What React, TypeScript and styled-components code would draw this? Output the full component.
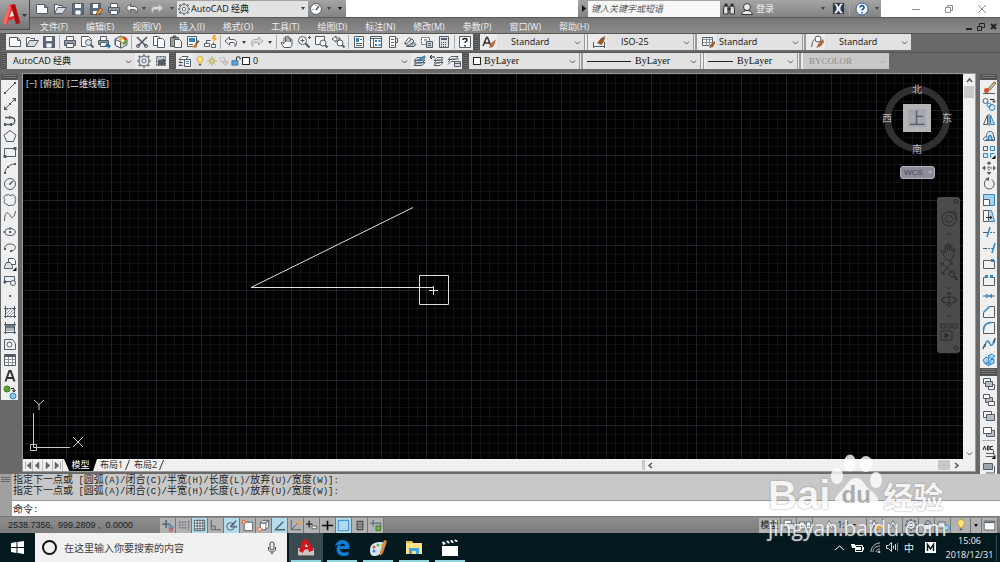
import React from 'react';
import type { ReactNode } from 'react';
import styled, { createGlobalStyle, css } from 'styled-components';

const ui = '"Open Sans", "Noto Sans CJK SC", sans-serif';
const mono = '"Liberation Mono", "Noto Sans CJK SC", monospace';

const GlobalStyle = createGlobalStyle`
  *, *::before, *::after { box-sizing: border-box; }
  body { margin: 0; background: #6b6b6b; font-family: ${ui}; font-size: 9px; line-height: 12px; }
  button, input, select { font: inherit; color: inherit; border: 0; margin: 0; padding: 0; background: none; border-radius: 0; }
  svg { display: block; flex: none; }
`;

/* ---------- icons, all on a 16 unit square ---------- */

const K = '#525c66';
const B = '#2f86c8';
const page = '#fbfcfd';

const icons: Record<string, ReactNode> = {
  New: <path d="M2.5 3.5h8l3 3v6h-11z M10.5 3.5v3h3" fill={page} />,
  Open: <><path d="M2.5 12.5v-9h3l1 1h4v2" fill={page} /><path d="M2.5 12.5l3-6h9l-4 6z" fill="#d5dbe1" /></>,
  Save: <><path d="M2.5 2.5h11v11h-11z" fill="#5c6c80" /><path d="M5 3h6v4H5zM5.5 9.5h5v4h-5z" fill={page} stroke="none" /></>,
  'Save As': <><path d="M2.5 2.5h10v11h-10z" fill="#5c6c80" /><path d="M5 3h5v4H5zM5 10h5v3H5z" fill={page} stroke="none" /><path d="M8 14l1-3 4-4 2 2-4 4z" fill="#e79a3c" stroke="#8a5a26" /></>,
  Print: <><path d="M4.5 6.5v-4h7v4" fill={page} /><path d="M2.5 6.5h11v5h-11z" fill="#8d98a3" /><path d="M4.5 9.5h7v4h-7z" fill={page} /></>,
  'Print Preview': <><path d="M12.5 7V5.5l-3-3h-7v10H7" fill={page} /><circle cx="9.5" cy="8.5" r="3" fill="#dbe7f0" /><path d="M11.5 10.5l3 3" strokeWidth="2" /></>,
  Publish: <><path d="M4.5 6.5v-4h6v4" fill={page} /><path d="M2.5 6.5h10v4h-10z" fill="#8d98a3" /><path d="M4.5 8.5h6v4h-6z" fill={page} /><path d="M9 11h3V9l3 3-3 3v-2H9z" fill="#1f6fc0" stroke="none" /></>,
  '3D DWF': <><path d="M8 2l6 3v6l-6 3-6-3V5z" fill="#cfe0ee" /><circle cx="10" cy="6.500" r="4" fill="#e8b23c" stroke="none" /><path d="M10 6.500V2.500a4 4 0 0 1 4 4z" fill="#d2453a" stroke="none" /><path d="M10 6.500h4a4 4 0 0 1-4 4z" fill="#4aa04a" stroke="none" /><path d="M2.5 5.5l5 2.500v6l-5-2.500z" fill={page} /><circle cx="10" cy="6.500" r="1.500" fill={page} stroke="none" /></>,
  Cut: <><path d="M3 3l9 9M13 3l-9 9" strokeWidth="1.6" /><circle cx="4" cy="12" r="1.5" /><circle cx="12" cy="12" r="1.5" /></>,
  Copy: <><path d="M2.5 2.5h5l2 2v7h-7z" fill={page} /><path d="M6.5 4.5h5l2 2v7h-7z" fill={page} /></>,
  Paste: <><path d="M2.5 3.5h8v9h-8z" fill="#b09a7c" /><path d="M5 2h3v2H5z" fill={K} /><path d="M6.5 5.5h5l2 2v6h-7z" fill={page} /></>,
  'Match Properties': <><path d="M2.5 2.5h9v10h-9z" fill={page} /><path d="M4 4h6v4H4z" fill={B} stroke="none" /><path d="M4 10.5h4" /><path d="M13 6l1.500 1-3 4-1.500-1z" fill="#6b5642" stroke="none" /><path d="M7 13l3-3 2 1-1 3z" fill="#d77a2c" stroke="none" /></>,
  'Block Editor': <><path d="M2.5 9.5h5v3h-5zM9.5 10.5h4v3h-4z" fill={page} /><path d="M4.5 9.5v-3h4M11.5 10.5v-2" /><path d="M11 1l-1 4h2l-1 4 4-5h-2l1-3z" fill="#f2a62c" stroke="none" /></>,
  Undo: <path d="M6.5 3L2 7l4.500 4V8.500h3.500c2 0 2.500 1.500 2 4 3-3.500 1.500-7-2-7H6.500z" fill={page} />,
  Redo: <path d="M9.5 3L14 7l-4.500 4V8.500H6c-2 0-2.500 1.500-2 4-3-3.500-1.500-7 2-7h3.500z" fill="#dcdcdc" stroke="#a3a9ae" />,
  Pan: <path d="M5 13.500L2 9l1-1 2 2V4.500c0-1 1.500-1 1.500 0V3c0-1 1.500-1 1.500 0 0-1 2-1 2 0v1.500c0-1 1.500-1 1.500 0V6c0-1 1.500-1 1.500 0v5l-1.500 2.500zM6.500 4.500V8M8 3v5M10 4v4M11.500 5v3" fill={page} />,
  'Zoom Realtime': <><circle cx="6.5" cy="6.5" r="4" fill={page} /><path d="M9.5 9.5l4 4" strokeWidth="2" /><path d="M4.5 6.5h4M6.5 4.5v4M12 3.5h3M13.5 2v3" /></>,
  'Zoom Window': <><path d="M2.5 2.5h9v8h-9z" fill={page} /><circle cx="10" cy="9" r="3" fill={page} /><path d="M12 11l2.500 2.500" strokeWidth="2" /></>,
  'Zoom Previous': <><path d="M6 2L2 5l4 3V6h4V4H6z" fill={page} /><circle cx="10" cy="9" r="3" fill={page} /><path d="M12 11l2.500 2.500" strokeWidth="2" /></>,
  Properties: <><path d="M3.5 2.5h9v11h-9z" fill={page} /><path d="M5 4h3v4H5z" fill={B} stroke="none" /><path d="M9 5.5h2M5 9.5h6M5 11.5h6" /></>,
  DesignCenter: <><path d="M2.5 2.5h11v11h-11z" fill={page} /><path d="M2.5 4.5h11M5.5 4.5v9" /><path d="M7 6h2v2H7zM10.5 6h2v2h-2zM7 10h2v2H7zM10.5 10h2v2h-2z" fill={B} stroke="none" /></>,
  'Tool Palettes': <><path d="M4.5 2.5h6v11h-6z" fill={page} /><path d="M10.5 4.5h2v4h-2M6 5.5h3M6 8.5h3M6 11.5h3" /></>,
  'Sheet Set': <><path d="M2.5 9.500L7 3.500l2 1.500-3 5z" fill={page} /><path d="M3.5 10.500L10 5l2 2-5 5z" fill="#dfe4e9" /><path d="M4.5 12.500l7-4 2.500 2-2 2z" fill="#aeb7c0" /></>,
  Markup: <><path d="M2.5 3.5h8v7h-8z" fill={page} strokeDasharray="2 1" /><path d="M7.5 7.5h6v6h-6z" fill="#c9d4de" /><path d="M9 9.5h3M9 11.5h3M5 6h3" /></>,
  Calculator: <><path d="M3.5 2.5h9v11h-9z" fill="#d9dfe4" /><path d="M5 4h6v2H5z" fill={K} stroke="none" /><path d="M5 8.5h6M5 10.5h6M5 12.5h6" strokeDasharray="1 1" /></>,
  Help: <><path d="M2.5 2.5h11v11h-11z" fill={page} /><path d="M6 6c0-2 4-2 4 0 0 1.500-2 1.500-2 3M8 11v1.500" stroke="#222" strokeWidth="1.5" /></>,
  'Text Style': <><path d="M2 12L5.500 3.500h1L10 12M3.500 9h5" stroke="#333" strokeWidth="1.5" /><path d="M15 5.500l-3 2-3 3.500-1 3 4-1 1.500-3z" fill="#b96a34" stroke="none" /></>,
  'Dimension Style': <><path d="M2.5 8v6M13.5 8v6M3 12.5h10" /><path d="M14 2.500l-4 2-3.500 4.500 4 1.500 2-3z" fill="#a5551f" stroke="#6b3d1c" strokeWidth=".5" /></>,
  'Table Style': <><path d="M2.5 3.5h10v8h-10z" fill={page} /><path d="M2.5 5.5h10M2.5 8.5h10M6.5 4v8M9.5 4v8" stroke="#87929d" /><path d="M15 7l-4 3-2 4 4-1 2-4z" fill="#a5551f" stroke="none" /></>,
  'Multileader Style': <><path d="M2.5 13c1-6 2-7 4-8" /><circle cx="9" cy="5" r="3" fill={page} /><path d="M14 5l-4 4-3 5 5-2 3-4z" fill="#b0602a" stroke="none" /></>,
  Gear: <><path d="M8 2.500v-1M8 14.500v-1M2.500 8h-1M14.500 8h-1M4 4l-1-1M12 4l1-1M4 12l-1 1M12 12l1 1" strokeWidth="2.4" /><circle cx="8" cy="8" r="5" fill="#e9ecef" /><circle cx="8" cy="8" r="2" fill={page} /></>,
  'My Workspace': <><path d="M3.5 3.5h9v9h-9z" strokeDasharray="2 1" fill="#b9c2cb" /><path d="M5 7h3l1-1h3v6H5z" fill={K} stroke="none" /></>,
  'Layer Properties': <><path d="M2 6.500l3-3h6l-2 3zM2 9.500l2-2M2 12.500l2-2M2 12.500h4M2 9.500h4" fill={page} /><path d="M7.5 6.500h6v7h-6z" fill={page} /><path d="M9 8.500h3M9 10.500h3" stroke={B} /></>,
  Bulb: <><path d="M8 1.500a4 4 0 0 0-2.500 7l1 2.500h3l1-2.500a4 4 0 0 0-2.500-7z" fill="#ffe37a" stroke="#c09a30" /><path d="M6.500 13h3" strokeWidth="2" /></>,
  Sun: <><circle cx="8" cy="8" r="3" fill="#ffe37a" stroke="#8a7a30" /><path d="M8 1.500v2M8 12.500v2M1.500 8h2M12.500 8h2M3.500 3.500l1 1M11.500 11.500l1 1M3.500 12.500l1-1M11.500 4.500l1-1" stroke="#8a8250" /></>,
  'Viewport Freeze': <g stroke="#b5b5b5"><path d="M2.500 3.500h6v5h-6z" /><circle cx="10" cy="10" r="3" /><path d="M10 5.500v9M5.500 10h9" /></g>,
  Unlock: <><path d="M2.500 7.500h8v6h-8z" fill="#59a7d8" stroke="#2b6d9a" /><path d="M8.500 7V4.500c0-3 5-3 5 0V6" stroke="#333" strokeWidth="1.4" /></>,
  'Make Current': <><path d="M2 12.500l3-3h8l-3 3zM2 10l3-3h8l-3 3zM2 7.500l3-3h8l-3 3z" fill="#cfe3f3" /><path d="M7 7l6-4" stroke={B} strokeWidth="2" /></>,
  'Layer Previous': <><path d="M5 12.500l3-3h6l-3 3zM5 10l3-3h6l-3 3zM5 7.500l3-3h6l-3 3z" fill={page} /><path d="M1 4h5M3 2L1 4l2 2" stroke="#222" /></>,
  'Layer States': <><path d="M2 11.500l3-3h8M2 9l3-3h8M2 6.500l3-3h7l-3 3z" fill={page} /><path d="M8.500 8.500h6v5h-6z" fill="#d5dce3" /><path d="M9 10.500h5" /></>,

  Line: <><path d="M3.500 12.500l9-9" /><path d="M2 12h2v2H2zM12 2h2v2h-2z" fill={K} stroke="none" /></>,
  'Construction Line': <><path d="M3 13L13 3" /><path d="M2 14v-4l4 4zM14 2v4l-4-4zM7 7h2v2H7z" fill={K} stroke="none" /></>,
  Polyline: <><path d="M3 5.500h6c5 0 5 7 0 7H3" strokeWidth="1.3" /><path d="M2 11h2v3H2zM8 11h2v3H8zM7 3.500l3 2-3 2z" fill={K} stroke="none" /></>,
  Polygon: <path d="M8 2.500l6 4.500-2.500 6.500h-7L2 7z" fill="#eef2f5" />,
  Rectangle: <><path d="M2.500 4.500h11v8h-11z" fill="#eef2f5" /><path d="M1.500 11h3v3h-3zM11.500 3h3v3h-3z" fill={K} stroke="none" /></>,
  Arc: <><path d="M3 13c0-4 4-9 10-9" /><path d="M2 12h2v2H2zM5 6h2v2H5zM12 3h2v2h-2z" fill={K} stroke="none" /></>,
  Circle: <><circle cx="8" cy="8" r="5.500" fill="#eef2f5" /><path d="M8 8l3-3M7 8h2" strokeWidth="1.400" /></>,
  'Revision Cloud': <path d="M5 3c2-1 3 0 3 1 2-2 6-1 5 2 1 1 1 2 0 3 1 3-2 5-4 4-1 1-3 1-4-1-2 1-4-2-2-4-2-2-1-5 2-5z" fill="#eef2f5" />,
  Spline: <path d="M2.500 13c0-12 5-8 6-5s4 2 5-5" />,
  Ellipse: <><ellipse cx="8" cy="8" rx="5.500" ry="3.500" fill="#eef2f5" /><path d="M7 3.500h2v2H7zM1.500 7h2v2h-2zM7 7h2v2H7z" fill={K} stroke="none" /></>,
  'Ellipse Arc': <><path d="M3 9c-1-3 2-5 5-5 5 0 7 4 4 6-1 1-3 1-4 1" /><path d="M2 8h2v2H2zM8 10h2v2H8z" fill={K} stroke="none" /></>,
  'Insert Block': <><path d="M6.500 2.500h5l2 2v4h-7z" fill={page} /><path d="M2.500 10.500l2-4h4l2 4v2h-8z" fill="#dbe1e6" /><path d="M14.500 11v4h-4z" fill="#111" stroke="none" /></>,
  'Make Block': <><path d="M2.500 4.500h10v5h-10z" fill="#eef2f5" /><circle cx="11" cy="11" r="2.500" fill={page} /><path d="M2 9h2v2H2z" fill={K} /></>,
  Point: <path d="M7 7h2v2H7z" fill={K} stroke="none" />,
  Hatch: <><path d="M3.500 2v12M12.500 2v12M2 4.500h12M2 12.500h12" /><path d="M4 7l3-3M4 10l6-6M5 12l7-7M8 12l4-4" stroke="#96a0a8" /></>,
  Gradient: <><path d="M3.500 2v12M12.500 2v12M2 4.500h12M2 12.500h12" /><path d="M4 5h8v3H4z" fill="#6e7882" stroke="none" /><path d="M4 8h8v3H4z" fill="#aeb6bd" stroke="none" /></>,
  Region: <><path d="M2.500 3.500h8l3 4v6h-11z" fill="#eef2f5" /><circle cx="7.500" cy="8.500" r="2.500" fill={page} /></>,
  Table: <><path d="M2.500 2.500h11v11h-11z" fill={page} /><path d="M3 3h10v2H3z" fill={K} stroke="none" /><path d="M2.500 7.500h11M2.500 10.500h11M6.500 5v8M10.500 5v8" stroke="#87929d" /></>,
  'Multiline Text': <path d="M3.500 13.500L7.300 3h1.400l3.800 10.500M5 10h6" stroke="#333" strokeWidth="2" />,
  'Add Selected': <><circle cx="5" cy="5" r="3" fill="#5aa33a" stroke="#3c7a24" /><circle cx="11" cy="12" r="3" fill="#8fc4ec" stroke={B} /><path d="M9 4.500h3v3M10.500 6l1.500 2 1.500-2" stroke="#222" /></>,

  Erase: <><path d="M2 13.500h12" /><path d="M7 9l6-7 2 1-6 7z" fill="#e9c9a0" stroke="#775a3a" /><circle cx="5.500" cy="10.500" r="2.500" fill="#d4502a" stroke="none" /></>,
  'Copy Object': <><circle cx="4.500" cy="5" r="2.500" /><circle cx="11" cy="11.500" r="3" stroke={B} fill="#d6e9f8" /><circle cx="8" cy="9" r="2" stroke={B} /><path d="M9 3.500h4v2M11.500 5l1.500 1.500L14.500 5" stroke="#222" /></>,
  Mirror: <><path d="M6.500 3v9.500h-4z" fill={page} /><path d="M9.500 3v9.500h4z" fill="#bcdcf5" stroke={B} /><path d="M8 2v12" /></>,
  Offset: <><path d="M3.500 12.500c-2-1-1-4 2-3.500-1-7 8-8 7 0h1v3.500z" fill="#d6e9f8" /><path d="M5 11.500h3c-2-3 2-6 2.500-2v2h2" stroke={B} strokeWidth="1.5" /></>,
  Array: <><path d="M2.500 2.500h4v4h-4z" /><path d="M9.500 2.500h4v4h-4zM2.500 9.500h4v4h-4zM9.500 13.500v-4h4" stroke={B} fill="#d6e9f8" /><path d="M14.500 11v4h-4z" fill="#111" stroke="none" /></>,
  Move: <><path d="M8 3v10M3 8h10" strokeDasharray="2 1" /><path d="M8 1l2.500 3h-5zM8 15l2.500-3h-5zM1 8l3-2.500v5zM15 8l-3-2.500v5z" fill={K} stroke="none" /></>,
  Rotate: <><path d="M6 3.500a5 5 0 1 0 4.500 0" /><path d="M4 3l4-2v4z" fill={K} stroke="none" /></>,
  Scale: <><path d="M2.500 2.500h11v11h-11z" fill="#a8d2f2" stroke={B} /><path d="M2.500 7.500h6v6h-6z" fill={page} /></>,
  Stretch: <><path d="M7.500 2.500h3l3 11h-6" fill="#bcdcf5" stroke={B} /><path d="M2.500 2.500h5v11h-5z" fill={page} /><path d="M5 9.500h5M9 8l2 1.500L9 11" stroke="#222" /></>,
  Trim: <><path d="M6 13l3-10" stroke={B} strokeWidth="1.5" /><path d="M2 8.500h5" /><path d="M9 8.500h5" stroke={B} strokeDasharray="2 1" /></>,
  Extend: <><path d="M11 13l3-10" stroke={B} strokeWidth="1.5" /><path d="M2 8.500h4" /><path d="M7 8.500h5" stroke={B} strokeDasharray="2 1" /></>,
  'Break at Point': <><path d="M2.500 12.500v-8h11v8z" fill="#eef2f5" /><path d="M10 3h3v3h-3z" fill={B} stroke="none" /></>,
  Break: <><path d="M5 5.500H2.500v8h11v-8H11" fill="#eef2f5" /><path d="M4 3h3v3H4zM9 3h3v3H9z" fill={B} stroke="none" /></>,
  Join: <><path d="M2 8h12" /><path d="M5 5.500L8 8l-3 2.500zM11 5.500L8 8l3 2.500z" fill={B} stroke="none" /></>,
  Chamfer: <><path d="M2.500 13.500v-5l6-6h5v11z" fill="#eef2f5" /><path d="M2.500 8.500l6-6" stroke={B} strokeWidth="1.5" /></>,
  Fillet: <><path d="M2.500 13.500v-3c0-5 3-8 8-8h3v11z" fill="#eef2f5" /><path d="M2.500 10.500c0-5 3-8 8-8" stroke={B} strokeWidth="1.5" /></>,
  'Blend Curves': <><path d="M4 11c1-9 4-6 5-3s3 1 4-4" stroke={B} strokeWidth="1.3" /><path d="M2 13l2-5M13 7l1-5" strokeWidth="1.5" /></>,
  Explode: <path d="M2 8l3-3 3 1-1 4-3 2zM7 4l3-2 4 2-3 3zM9 8l4-1v4l-4 2zM5 12l3-2v4z" fill="#a8d2f2" stroke={B} />,

  'Bring to Front': <><path d="M2.500 2.500h7v5h-7zM7.500 8.500h6v5h-6z" fill={page} /><path d="M4.500 5.500h7v5h-7z" fill="#b7bec5" /></>,
  'Send to Back': <><path d="M4.500 5.500h7v5h-7z" fill="#b7bec5" /><path d="M2.500 2.500h6v4h-6zM7.500 9.500h6v4h-6z" fill={page} /></>,
  'Bring Above': <><path d="M2.500 3.500h8v6h-8z" fill={page} /><path d="M5.500 6.500h8v6h-8z" fill="#b7bec5" /></>,
  'Send Under': <><path d="M5.500 6.500h8v6h-8z" fill="#b7bec5" /><path d="M2.500 3.500h8v6h-8z" fill={page} /></>,
  'Text to Front': <><path d="M2 6l1.500-4L5 6M6.500 2v4H8V2zM12 2.500H9.500v3H12" stroke="#222" /><path d="M5 9.500h8v3H5M12.500 6v3" /><path d="M14.500 11v4h-4z" fill="#111" stroke="none" /></>,
  'Hatch to Back': <><path d="M2.500 3.500h9v6h-9z" fill="#9aa5b0" /><path d="M13.500 6v7H5" /></>,

  Infer: <><path d="M6.500 2v9M2 6.500h9" strokeWidth="1.5" /><path d="M8.500 9.500h4v4M10 8c4-1 5 3 3 4" stroke={B} /><path d="M10 11h3v3h-3z" stroke="#c44" /></>,
  'Snap Mode': <path d="M3 4.500h8M3 7.500h8M3 10.500h8M13.500 3v10" strokeDasharray="2 1" />,
  'Grid Display': <><path d="M2.500 2.500h11v11h-11z" fill={page} /><path d="M2.500 5.500h11M2.500 8.500h11M2.500 11.500h11M5.500 2v11M8.500 2v11M11.500 2v11" /></>,
  'Ortho Mode': <path d="M3.500 2v10.500H14M3.500 8.500h4v4" />,
  'Polar Tracking': <><circle cx="7" cy="9" r="4" /><path d="M7 9l6-6M7 9.500h7" strokeWidth="1.500" /></>,
  'Object Snap': <><path d="M4.500 4.500h9v9h-9z" fill={page} /><path d="M2.500 2.500h3v3h-3z" stroke="#e07030" fill="#fbd6b6" /></>,
  '3D Object Snap': <><path d="M4.500 5.500l3-3h6v7l-3 3h-6zM4.500 5.500h6l3-3M10.500 5.500v7" fill={page} /><circle cx="4" cy="12" r="2" stroke="#e07030" fill="#fbd6b6" /></>,
  'Snap Tracking': <path d="M3 12.500h11M4 12l8-8" strokeWidth="1.500" />,
  'Dynamic UCS': <><path d="M3.500 2v10.500H14M4 12l6-6" /><path d="M12 1l1 3 2 1-2 1-1 2-1-2-2-1 2-1z" fill="#f2a62c" stroke="none" /></>,
  'Dynamic Input': <><path d="M2 6.500h7M5.500 3v7" stroke="#222" strokeWidth="1.500" /><path d="M8.500 8.500h5v3h-5z" fill={page} /></>,
  Lineweight: <path d="M2 8h12M8 3v10" stroke="#111" strokeWidth="1.800" />,
  Transparency: <><path d="M2.500 2.500h11v11h-11z" fill="#9fd0f0" stroke={B} /><path d="M3 4.500h10M3 6.500h10M3 8.500h10M3 10.500h10M3 12.500h10" stroke="#e8f4fc" strokeDasharray="1 1" /></>,
  'Quick Properties': <><path d="M5.500 3.500h6v9h-6z" stroke="#222" /><path d="M7.500 5.500h2v5h-2z" /></>,
  'Selection Cycling': <><path d="M5.500 2v7M2 5.500h7M8.500 5.500h5v4" /><path d="M8.500 8.500h5v5h-5z" fill="#6ab04c" stroke="#3c7a24" /></>,
  'Quick View Layouts': <><path d="M2.500 2.500h8v8h-8z" fill={page} /><path d="M5.500 6.500h8v7h-8z" fill="#e8ecef" /></>,
  'Quick View Drawings': <path d="M1.500 4.500h6v8h-6zM9.500 4.500h5v8h-5zM3 9.500h3M11 9.500h2" fill={page} />,
  Annotation: <path d="M8 2L2 13h3l3-6 3 6h3z" fill={page} />,
  'Annotation Visibility': <><path d="M7 2L2 13h3l2-5 2 5h3z" fill={page} /><circle cx="12" cy="10" r="3" fill="#f4a832" stroke="none" /></>,
  Lock: <><path d="M4.500 7.500h8v6h-8z" fill={page} /><path d="M6.500 7V4.500c0-2 5-2 5 0V7" /></>,
  Hardware: <><path d="M2.500 4.500h8v7h-8z" fill="#dfe7ee" /><circle cx="12" cy="11" r="3" fill="#9fd0f0" stroke={B} /></>,
  'Clean Screen': <><path d="M1.500 2.500h13v11h-13z" fill={page} /><path d="M2 4h12" strokeWidth="2" /></>,

  Gauge: <><circle cx="8" cy="8" r="5.500" fill={page} /><path d="M8 9l3-4" strokeWidth="1.600" /><path d="M4.500 8.500h1M8 4v1" /></>,
  Search: <><path d="M3 5h4v8H2.500V9zM9 5h4l.5 4v4H9z" fill="#d8dde2" stroke="#333" /><path d="M4 3h2v2H4zM10 3h2v2h-2zM7 7h2v2H7z" fill="#333" stroke="#333" /></>,
  User: <><circle cx="8" cy="6" r="3.500" fill="#e6eaee" stroke="#333" /><path d="M2.500 13.500c1-3 3-4 5.500-4s4.500 1 5.500 4z" fill="#e6eaee" stroke="#333" /></>,
  Exchange: <><path d="M2 2h12v12H2z" fill="#2b3a4a" stroke="none" /><path d="M3 3c4 3 4 7 0 10h3l2-3 2 3h3c-4-3-4-7 0-10h-3L8 6 6 3z" fill="#e8edf2" stroke="none" /></>,
  Info: <><circle cx="8" cy="8" r="6" fill={page} stroke="#2c5f9a" /><path d="M6 6.500c0-2.500 4-2.500 4 0 0 1.500-2 1.500-2 3M8 11v1.500" stroke="#1f5ea8" strokeWidth="1.700" /></>,
};

const Icon = ({ name, size = 16 }: { name: string; size?: number }) => (
  <svg width={size} height={size} viewBox="0 0 16 16" fill="none" stroke={K} aria-hidden="true">{icons[name]}</svg>
);

/* ---------- shell ---------- */

const Shell = styled.div`
  position: relative;
  display: flex;
  flex-direction: column;
  height: 100vh;
  min-width: 960px;
  overflow: hidden;
  background: #696969;
  color: #2b2b2b;
`;

const Header = styled.header`
  display: flex;
  height: 33px;
  background: linear-gradient(#5f5f5f, #8b8b8b);
`;

const LogoButton = styled.button`
  display: flex;
  align-items: center;
  width: 30px;
  height: 30px;
  padding-left: 2px;
  border: solid #4c4c4c;
  border-width: 0 1px 1px 0;
  background: linear-gradient(#a6a6a6, #757575);
`;

const HeaderRows = styled.div`
  flex: 1;
  display: flex;
  flex-direction: column;
`;

const TitleRow = styled.div`
  display: flex;
  height: 18px;
  background: #fff;
  border-bottom: 1px solid #5a5a5a;
`;

const TitlePart = styled.div<{ $pad?: number }>`
  display: flex;
  align-items: center;
  padding-left: ${p => p.$pad ?? 0}px;
  background: linear-gradient(#a4a4a4, #838383);
`;

const TitleSpace = styled.div`flex: 1;`;

const TitleButton = styled.button<{ $w?: number }>`
  display: flex;
  align-items: center;
  justify-content: center;
  width: ${p => p.$w ?? 18}px;
  height: 17px;
`;

const SignIn = styled.button`
  width: 61px;
  text-align: left;
  color: #f2f2f2;
`;

const SearchInput = styled.input`
  width: 132px;
  height: 16px;
  padding: 0 3px;
  background: #f6f6f6;
  font-style: italic;
  &::placeholder { color: #555; opacity: 1; }
`;

const WindowButtons = styled.div`
  display: flex;
  align-items: center;
  width: 119px;
  padding-left: 18px;
  color: #8d8d8d;
`;

const MenuRow = styled.nav`
  flex: 1;
  display: flex;
  align-items: center;
  gap: 18px;
  padding-left: 10px;
`;

const MenuItem = styled.button`
  color: #f0f0f0;
  white-space: nowrap;
`;

const DocButtons = styled.div`
  display: flex;
  margin-left: auto;
`;

const Caret = styled.span<{ $c?: string }>`
  width: 0;
  border: 2px solid transparent;
  border-top: 3px solid ${p => p.$c ?? '#444'};
  border-bottom: 0;
`;

/* ---------- toolbars ---------- */

const ToolbarRow = styled.div<{ $h: number }>`
  display: flex;
  flex: none;
  height: ${p => p.$h}px;
  border-top: 1px solid #555;
`;

const Bar = styled.div`
  display: flex;
  align-items: center;
  height: 16px;
  background: #ececec;
`;

const Grip = styled.span<{ $w?: number }>`
  flex: none;
  width: ${p => p.$w ?? 7}px;
  height: 16px;
  border: solid #5a5a5a;
  border-width: 0 2px;
  background: repeating-linear-gradient(#6f6f6f 0 1px, #4a4a4a 1px 2px);
`;

const Split = styled.span<{ $w?: number }>`
  flex: none;
  width: ${p => p.$w ?? 4}px;
  height: 14px;
  border: solid transparent;
  border-width: 0 1px 0 2px;
  background: #a9a9a9;
  background-clip: padding-box;
`;

const Gutter = styled.span`
  flex: none;
  width: 6px;
  height: 16px;
  border-left: 1px solid #9a9a9a;
  border-right: 2px solid #ececec;
  background: linear-gradient(90deg, #ececec 50%, #9a9a9a 50%);
`;

const ToolButton = styled.button<{ $w?: number }>`
  display: flex;
  align-items: center;
  justify-content: center;
  flex: none;
  width: ${p => p.$w ?? 17}px;
  height: 16px;
`;

const SelectBox = styled.label<{ $w: number; $pad?: number; $off?: boolean; $serif?: boolean }>`
  display: flex;
  align-items: center;
  width: ${p => p.$w}px;
  height: 16px;
  padding: 0 3px 0 ${p => p.$pad ?? 6}px;
  background: ${p => (p.$off ? '#c9c9c9' : '#e2e2e2')};
  color: ${p => (p.$off ? '#8a8a8a' : '#111')};
  font-family: ${p => (p.$serif ? '"Liberation Serif", serif' : ui)};
  font-size: ${p => (p.$serif && !p.$off ? 10 : 9)}px;
`;

const Select = styled.select`
  appearance: none;
  flex: 1;
  min-width: 0;
  height: 14px;
  opacity: 1;
`;

const Swatch = styled.span`
  flex: none;
  width: 8px;
  height: 8px;
  margin-right: 3px;
  border: 1px solid #222;
  background: #fff;
`;

const Stroke = styled.span<{ $w: number }>`
  flex: none;
  width: ${p => p.$w}px;
  height: 1px;
  margin-right: 4px;
  background: #222;
`;

const Chevron = ({ dir = 'down', color = '#555' }: { dir?: 'down' | 'up' | 'left' | 'right'; color?: string }) => {
  const d = { down: 'M1 2.5l2.5 2.5L6 2.5', up: 'M1 5l2.5-3L6 5', left: 'M5 1L2 3.5 5 6', right: 'M2 1l3 2.5L2 6' }[dir];
  return <svg width="7" height="7" viewBox="0 0 7 7" fill="none" stroke={color} strokeWidth={dir === 'down' ? 1 : 1.5} aria-hidden="true"><path d={d} /></svg>;
};

type PickProps = { label: string; value: string; w: number; pad?: number; off?: boolean; serif?: boolean; children?: ReactNode };
const Pick = ({ label, value, w, pad, off, serif, children }: PickProps) => (
  <SelectBox $w={w} $pad={pad} $off={off} $serif={serif}>
    {children}
    <Select aria-label={label} disabled={off}><option>{value}</option></Select>
    <Chevron color={off ? '#aaa' : '#555'} />
  </SelectBox>
);

const Tools = ({ names, w }: { names: string[]; w?: number }) => (
  <>
    {names.map((n, i) => {
      if (n === '|') return <Split key={i} />;
      if (n === 'v') return <ToolButton key={i} $w={9} aria-label="History"><Caret /></ToolButton>;
      return <ToolButton key={i} $w={w} aria-label={n}><Icon name={n} /></ToolButton>;
    })}
  </>
);

/* ---------- work area ---------- */

const Work = styled.main`
  flex: 1;
  display: flex;
  min-height: 0;
`;

const Dock = styled.div<{ $w: number; $pad: number }>`
  flex: none;
  width: ${p => p.$w}px;
  padding: 1px 0 2px ${p => p.$pad}px;
  overflow: hidden;
`;

const Palette = styled.div`
  display: flex;
  flex-direction: column;
  width: 17px;
  background: #efefef;
`;

const PaletteGrip = styled.span<{ $h?: number }>`
  flex: none;
  height: ${p => p.$h ?? 6}px;
  border: solid #555;
  border-width: 1px 2px;
  background: repeating-linear-gradient(#7a7a7a 0 1px, #4a4a4a 1px 2px);
`;

const PaletteRule = styled.span`
  height: 4px;
  margin: 0 2px;
  border-top: 1px solid #aaa;
`;

const Document = styled.section`
  flex: 1;
  display: flex;
  flex-direction: column;
  min-width: 0;
  margin-bottom: 2px;
  border: 1px solid #9c9c9c;
`;

const View = styled.div`
  flex: 1;
  display: flex;
  min-height: 0;
`;

const Canvas = styled.div`
  position: relative;
  flex: 1;
  overflow: hidden;
  background-color: #000;
  background-image:
    linear-gradient(90deg, #20202b 1px, transparent 1px),
    linear-gradient(#20202b 1px, transparent 1px),
    linear-gradient(90deg, #101014 1px, transparent 1px),
    linear-gradient(#101014 1px, transparent 1px);
  background-size: 45px 45px, 45px 45px, 9px 9px, 9px 9px;
  background-position: 43px 36px, 43px 36px, 43px 36px, 43px 36px;
`;

const ViewLabels = styled.div`
  display: flex;
  gap: 3px;
  padding: 4px 3px;
  color: #e0e0e0;
`;

const Drawing = styled.svg`
  position: absolute;
  left: 0;
  top: 0;
`;

const Ucs = styled.svg`
  position: absolute;
  left: 6px;
  bottom: 5px;
`;

const Compass = styled.div`
  position: absolute;
  top: 9px;
  right: 10px;
  display: grid;
  grid-template: 11px 48px 13px / 12px 48px 12px;
  place-items: center;
  color: #b5b5b5;
  font-size: 10px;
  &::before {
    content: '';
    position: absolute;
    left: 3px;
    top: 3px;
    width: 66px;
    height: 66px;
    border: 7px solid #303030;
    border-radius: 50%;
  }
`;

const CompassLetter = styled.span<{ $area: string }>`
  position: relative;
  grid-area: ${p => p.$area};
`;

const CubeFace = styled.button`
  position: relative;
  grid-area: 2 / 2;
  width: 28px;
  height: 28px;
  border: 5px solid #b4b4b4;
  background: #a3a7ae;
  color: #55585f;
  font-size: 16px;
  line-height: 16px;
`;

const WcsButton = styled.button`
  position: absolute;
  top: 92px;
  right: 28px;
  display: flex;
  align-items: center;
  gap: 5px;
  width: 35px;
  height: 13px;
  padding-left: 3px;
  border: 1px solid #b6b6c2;
  border-radius: 3px;
  background: #8c8c9a;
  color: #4a4a52;
  font-family: "Liberation Sans", sans-serif;
  font-size: 8px;
`;

const NavBar = styled.div`
  position: absolute;
  top: 123px;
  right: 3px;
  width: 23px;
  height: 156px;
  border-radius: 3px;
  background: #4b4b4b;
`;

const VScroll = styled.div`
  display: flex;
  flex-direction: column;
  align-items: center;
  width: 12px;
  background: #f0f0f0;
`;

const ScrollButton = styled.button`
  display: flex;
  align-items: center;
  justify-content: center;
  width: 12px;
  height: 12px;
`;

const Thumb = styled.span<{ $w: number; $h: number }>`
  width: ${p => p.$w}px;
  height: ${p => p.$h}px;
  background: #c9c9c9;
`;

const Spacer = styled.span`flex: 1;`;

const TabRow = styled.div`
  display: flex;
  align-items: center;
  height: 12px;
  background: #f0f0f0;
`;

const TabNav = styled.button`
  display: flex;
  align-items: center;
  justify-content: center;
  width: 10px;
  height: 11px;
  border-right: 1px solid #bbb;
`;

const Tab = styled.button<{ $on?: boolean }>`
  position: relative;
  width: ${p => (p.$on ? 33 : 34)}px;
  height: 12px;
  white-space: nowrap;
  ${p => p.$on
    ? css`margin-left: 1px; background: #000; color: #fff; clip-path: polygon(0 0, 100% 0, 88% 100%, 16% 100%);`
    : css`padding-left: 3px; text-align: left; &::after { content: ''; position: absolute; right: 3px; top: 1px; height: 10px; border-right: 1px solid #333; transform: skewX(-22deg); }`}
`;

const HScroll = styled.div`
  display: flex;
  align-items: center;
  flex: 0 0 35%;
  height: 12px;
  margin-left: auto;
  padding-right: 13px;
`;

/* ---------- command line and status ---------- */

const Command = styled.section`
  flex: none;
  display: flex;
  height: 43px;
  border-bottom: 1px solid #777;
  background: #a0a0a0;
  color: #1e1e1e;
  font-family: ${mono};
  font-size: 10px;
  line-height: 11px;
`;

const CommandGrip = styled.span`
  width: 12px;
  height: 5px;
  margin-top: 3px;
  border: solid #a0a0a0;
  border-width: 0 2px 0 1px;
  background: repeating-linear-gradient(#666 0 1px, #a0a0a0 1px 2px);
`;

const CommandText = styled.div`
  flex: 1;
  display: flex;
  flex-direction: column;
`;

const History = styled.div`
  height: 30px;
  padding: 1px;
  border-bottom: 1px solid #999;
  background: #c8c8c8;
`;

const HistoryLine = styled.div`
  height: 11px;
  white-space: pre;
`;

const Ascii = styled.span`font-size: 9px;`;

const Prompt = styled.label`
  flex: 1;
  display: flex;
  align-items: center;
  padding: 4px 0 0 1px;
  background: #fff;
`;

const PromptInput = styled.input`flex: 1; outline: 0;`;

const mixed = (text: string) =>
  text.split(/([ -~]+)/).map((part, i) => (i % 2 ? <Ascii key={i}>{part}</Ascii> : part));

const Status = styled.footer`
  flex: none;
  display: flex;
  align-items: center;
  height: 16px;
  padding-right: 2px;
  background: linear-gradient(#8d8d8d, #7c7c7c);
`;

const Coordinates = styled.div`
  width: 160px;
  padding-left: 8px;
  color: #1c1c1c;
  font-family: "Liberation Sans", sans-serif;
  white-space: pre;
`;

const StatusButton = styled.button<{ $w?: number; $on?: boolean }>`
  display: flex;
  align-items: center;
  justify-content: center;
  gap: 2px;
  width: ${p => p.$w ?? 16}px;
  height: 15px;
  border-right: 1px solid #777;
  background: ${p => (p.$on ? '#b4dceb' : '#b2b2b2')};
  color: #1c1c1c;
  white-space: nowrap;
`;

/* ---------- desktop taskbar ---------- */

const Taskbar = styled.div`
  flex: none;
  display: flex;
  height: 29px;
  background: #04191e;
  color: #f3f3f3;
`;

const StartButton = styled.button`
  display: grid;
  place-items: center;
  width: 35px;
`;

const TaskSearch = styled.label`
  display: flex;
  align-items: center;
  width: 252px;
  padding: 0 8px 0 6px;
  background: #f1f1f1;
  font-size: 10px;
`;

const TaskInput = styled.input`
  flex: 1;
  min-width: 0;
  margin-left: 6px;
  &::placeholder { color: #3c3c3c; opacity: 1; }
`;

const Tasks = styled.div`
  display: flex;
  gap: 2px;
  padding-left: 2px;
`;

const Task = styled.button<{ $on?: boolean }>`
  display: grid;
  place-items: center;
  width: 34px;
  border: solid transparent;
  border-width: 0 2px;
  background: ${p => (p.$on ? '#3b4a4e' : 'none')};
  background-clip: border-box;
  position: relative;
  &::after {
    content: '';
    position: absolute;
    left: 0;
    right: 0;
    bottom: 0;
    height: 2px;
    background: #8fd7dc;
  }
`;

const Tray = styled.div`
  display: flex;
  align-items: center;
  margin-left: auto;
  padding-right: 3px;
`;

const TrayButton = styled.button<{ $w?: number }>`
  display: grid;
  place-items: center;
  width: ${p => p.$w ?? 18}px;
  height: 29px;
  font-size: 10px;
`;

const Clock = styled.time`
  display: flex;
  flex-direction: column;
  align-items: center;
  gap: 2px;
  width: 54px;
  border-right: 1px solid #3a4a4e;
`;

/* ---------- watermark ---------- */

const Watermark = styled.div`
  position: absolute;
  right: 52px;
  bottom: 22px;
  display: flex;
  flex-direction: column;
  width: 180px;
  color: #fff;
  opacity: .8;
  pointer-events: none;
  text-shadow: 0 0 2px #777;
`;

const Brand = styled.div`
  display: flex;
  align-items: flex-end;
  font: 700 40px/42px "Liberation Sans", sans-serif;
`;

const BrandCjk = styled.span`
  margin-left: 1px;
  font: 700 30px/42px "Noto Sans CJK SC", sans-serif;
`;

const PawBox = styled.div`
  position: relative;
  display: flex;
  justify-content: center;
  width: 52px;
  height: 62px;
`;

const PawText = styled.span`
  position: absolute;
  bottom: 9px;
  color: #a6a6a6;
  font-size: 24px;
  line-height: 24px;
  text-shadow: none;
`;

const Site = styled.div`
  font: 400 21px/24px "Open Sans", sans-serif;
  white-space: nowrap;
`;

const menus = ['文件(F)', '编辑(E)', '视图(V)', '插入(I)', '格式(O)', '工具(T)', '绘图(D)', '标注(N)', '修改(M)', '参数(P)', '窗口(W)', '帮助(H)'];

const standard = ['New', 'Open', 'Save', '|', 'Print', 'Print Preview', 'Publish', '3D DWF', '|', 'Cut', 'Copy', 'Paste', 'Match Properties', 'Block Editor', '|', 'Undo', 'v', 'Redo', 'v', '|', 'Pan', 'Zoom Realtime', 'Zoom Window', 'Zoom Previous', '|', 'Properties', 'DesignCenter', 'Tool Palettes', 'Sheet Set', 'Markup', 'Calculator', '|', 'Help'];

const draw = ['Line', 'Construction Line', 'Polyline', 'Polygon', 'Rectangle', 'Arc', 'Circle', 'Revision Cloud', 'Spline', 'Ellipse', 'Ellipse Arc', 'Insert Block', 'Make Block', 'Point', 'Hatch', 'Gradient', 'Region', 'Table', 'Multiline Text', 'Add Selected'];

const modify = ['Erase', 'Copy Object', 'Mirror', 'Offset', 'Array', 'Move', 'Rotate', 'Scale', 'Stretch', 'Trim', 'Extend', 'Break at Point', 'Break', 'Join', 'Chamfer', 'Fillet', 'Blend Curves', 'Explode'];

const modes: [string, boolean][] = [['Infer', false], ['Snap Mode', false], ['Grid Display', true], ['Ortho Mode', false], ['Polar Tracking', true], ['Object Snap', false], ['3D Object Snap', false], ['Snap Tracking', true], ['Dynamic UCS', false], ['Dynamic Input', false], ['Lineweight', false], ['Transparency', true], ['Quick Properties', false], ['Selection Cycling', false]];

const history = '指定下一点或 [圆弧(A)/闭合(C)/半宽(H)/长度(L)/放弃(U)/宽度(W)]:';

const NavTools = () => (
  <svg width="23" height="156" viewBox="0 0 23 156" fill="none" stroke="#2c2c2c" aria-hidden="true">
    <circle cx="19" cy="4" r="2" />
    <circle cx="12" cy="22" r="7" /><circle cx="12" cy="22" r="3.5" /><path d="M12 15h7v7M10 36l2 2 2-2" />
    <path d="M8 60l-4-6 1-1 3 3v-7l1.500-1 1 6v-7h2v7l1-6 1.500 1v6l2-3 1 1-2 7-2 3H9z" />
    <path d="M4 66l12 11M15 65L5 77M4 69v-3h3M12 65h3v3M5 74v3h3" /><circle cx="15" cy="77" r="3" /><path d="M17 79l3 4" strokeWidth="2" /><path d="M10 90l2 2 2-2" />
    <path d="M12 95v15M9 98l3-3 3 3M9 107l3 3 3-3M7 100l-3 3 3 3M17 100l3 3-3 3" /><ellipse cx="12" cy="103" rx="7" ry="3" /><path d="M10 118l2 2 2-2" />
    <path d="M4 127h4v4H4zM10 127h4v4h-4zM16 127h4v4h-4zM4 134h11v9H4z" /><path d="M8 136l4 2.500-4 2.500z" fill="#2a2a2a" />
    <circle cx="19" cy="151" r="2" />
  </svg>
);

export default function App() {
  return (
    <Shell>
      <GlobalStyle />
      <Header>
        <LogoButton aria-label="Application menu">
          <svg width="26" height="26" viewBox="0 0 26 26" aria-hidden="true">
            <path d="M1 21L7 3l6-1 5 19-4 1-2-5-6 2-1 4z" fill="#e03034" />
            <path d="M9 3l4-1 5 19-4 1z" fill="#a80f14" />
            <path d="M7 15l3-7 2 6z" fill="#f5dcdc" />
            <path d="M1 21L7 3l2 2-5 18z" fill="#ff6a5e" />
            <path d="M20 12h5l-2.500 3z" fill="#333" />
          </svg>
        </LogoButton>
        <HeaderRows>
          <TitleRow>
            <TitlePart $pad={3}>
              {['New', 'Open', 'Save', 'Save As', 'Print', 'Undo'].map(n => <TitleButton key={n} aria-label={n}><Icon name={n} /></TitleButton>)}
              <TitleButton $w={6} aria-label="Undo list"><Caret /></TitleButton>
              <TitleButton $w={20} aria-label="Redo"><Icon name="Redo" /></TitleButton>
              <TitleButton $w={10} aria-label="Redo list"><Caret /></TitleButton>
              <SelectBox $w={131} $pad={0}>
                <Icon name="Gear" size={14} />
                <Select aria-label="Workspace"><option>AutoCAD 经典</option></Select>
                <Caret />
              </SelectBox>
              <TitleButton $w={16} aria-label="Performance"><Icon name="Gauge" /></TitleButton>
              <TitleButton $w={10} aria-label="Performance list"><Caret /></TitleButton>
              <TitleButton $w={12} aria-label="Customize"><Caret $c="#111" /></TitleButton>
            </TitlePart>
            <TitleSpace />
            <TitlePart>
              <TitleButton $w={10} aria-label="Expand search">
                <svg width="5" height="7" viewBox="0 0 5 7" aria-hidden="true"><path d="M1 0l4 3.5L1 7z" fill="#111" /></svg>
              </TitleButton>
              <SearchInput aria-label="Search" placeholder="键入关键字或短语" />
              <TitleButton aria-label="Find"><Icon name="Search" /></TitleButton>
              <TitleButton aria-label="Account"><Icon name="User" /></TitleButton>
              <SignIn>登录</SignIn>
              <TitleButton $w={12} aria-label="Account list"><Caret /></TitleButton>
              <TitleButton aria-label="Exchange"><Icon name="Exchange" size={15} /></TitleButton>
              <Split $w={4} />
              <TitleButton $w={22} aria-label="Help"><Icon name="Info" /></TitleButton>
              <TitleButton $w={8} aria-label="Help list"><Caret /></TitleButton>
            </TitlePart>
            <WindowButtons>
              <TitleButton $w={33} aria-label="Minimize"><svg width="8" height="8" fill="none" stroke="currentColor"><path d="M0 4.5h8" /></svg></TitleButton>
              <TitleButton $w={33} aria-label="Restore"><svg width="8" height="8" fill="none" stroke="currentColor"><path d="M.5 2.5h5v5h-5zM2.5 2V.5h5v5H6" /></svg></TitleButton>
              <TitleButton $w={33} aria-label="Close"><svg width="8" height="8" fill="none" stroke="currentColor"><path d="M0 0l8 8M8 0L0 8" /></svg></TitleButton>
            </WindowButtons>
          </TitleRow>
          <MenuRow>
            {menus.map(m => <MenuItem key={m}>{m}</MenuItem>)}
            <DocButtons>
              <TitleButton $w={12} aria-label="Minimize drawing"><svg width="8" height="8" stroke="#222" strokeWidth="2"><path d="M1 6h6" /></svg></TitleButton>
              <TitleButton $w={12} aria-label="Restore drawing"><svg width="8" height="8" fill="none" stroke="#222"><path d="M.5 3.5h4v4h-4zM2.5 3V.5h5v4H5" /></svg></TitleButton>
              <TitleButton $w={13} aria-label="Close drawing"><svg width="7" height="7" stroke="#222" strokeWidth="2"><path d="M1 1l5 5M6 1L1 6" /></svg></TitleButton>
            </DocButtons>
          </MenuRow>
        </HeaderRows>
      </Header>

      <ToolbarRow $h={19}>
        <Grip $w={6} />
        <Bar><Tools names={standard} /></Bar>
        <Grip />
        <Bar>
          <Tools names={['Text Style']} /><Pick label="Text style" value="Standard" w={87} pad={14} /><Gutter />
          <Tools names={['Dimension Style']} /><Pick label="Dimension style" value="ISO-25" w={86} pad={14} /><Gutter />
          <Tools names={['Table Style']} /><Pick label="Table style" value="Standard" w={86} pad={3} /><Gutter />
          <Tools names={['Multileader Style']} /><Pick label="Multileader style" value="Standard" w={86} pad={14} />
        </Bar>
      </ToolbarRow>
      <ToolbarRow $h={21}>
        <Grip />
        <Bar>
          <Pick label="Workspaces" value="AutoCAD 经典" w={128} />
          <Tools names={['Gear', 'My Workspace']} />
        </Bar>
        <Grip />
        <Bar>
          <Tools names={['Layer Properties']} />
          <SelectBox $w={218} $pad={1}>
            {['Bulb', 'Sun', 'Viewport Freeze', 'Unlock'].map(n => <Icon key={n} name={n} size={12} />)}
            <Swatch />
            <Select aria-label="Layer"><option>0</option></Select>
            <Chevron />
          </SelectBox>
          <Tools names={['Make Current', 'Layer Previous', 'Layer States']} />
        </Bar>
        <Grip />
        <Bar>
          <Pick label="Color" value="ByLayer" w={110} pad={4} serif><Swatch /></Pick><Gutter />
          <Pick label="Linetype" value="ByLayer" w={115} pad={2} serif><Stroke $w={44} /></Pick><Gutter />
          <Pick label="Lineweight" value="ByLayer" w={91} pad={2} serif><Stroke $w={25} /></Pick><Gutter />
          <Pick label="Plot style" value="BYCOLOR" w={86} off serif />
        </Bar>
      </ToolbarRow>

      <Work>
        <Dock $w={22} $pad={1}>
          <Palette><PaletteGrip /><Tools names={draw} /></Palette>
        </Dock>
        <Document>
          <View>
            <Canvas>
              <ViewLabels><span>[−]</span><span>[俯视]</span><span>[二维线框]</span></ViewLabels>
              <Drawing width="500" height="300" fill="none" stroke="#e0e0e0" aria-hidden="true">
                <path d="M228 213.500L390 133.500M228 213.500h182M396.500 201.500h29v29h-29zM406 216.500h9M410.500 212v9" />
              </Drawing>
              <Ucs width="58" height="56" fill="none" stroke="#c8c8c8" aria-hidden="true">
                <path d="M1.500 46.500h6v6h-6zM4.500 50V15M4 49.500h37M5 2l5 4.500L15 2M10 6v6M44 39l10 10M54 39L44 49" />
              </Ucs>
              <Compass>
                <CompassLetter $area="1 / 2">北</CompassLetter>
                <CompassLetter $area="2 / 1">西</CompassLetter>
                <CubeFace>上</CubeFace>
                <CompassLetter $area="2 / 3">东</CompassLetter>
                <CompassLetter $area="3 / 2">南</CompassLetter>
              </Compass>
              <WcsButton>WCS<Caret $c="#b6b6c2" /></WcsButton>
              <NavBar><NavTools /></NavBar>
            </Canvas>
            <VScroll>
              <ScrollButton aria-label="Scroll up"><Chevron dir="up" /></ScrollButton>
              <Thumb $w={10} $h={12} />
              <Spacer />
              <ScrollButton aria-label="Scroll down"><Chevron /></ScrollButton>
            </VScroll>
          </View>
          <TabRow>
            {['M1.5 0v7M7 0L3 3.5 7 7z', 'M5 0L1 3.5 5 7z', 'M2 0l4 3.5L2 7z', 'M1 0l4 3.5L1 7zM6.5 0v7'].map((d, i) => (
              <TabNav key={d} aria-label={['First', 'Previous', 'Next', 'Last'][i]}><svg width="8" height="7" fill="#666" stroke="#666" strokeWidth=".5" aria-hidden="true"><path d={d} /></svg></TabNav>
            ))}
            <Tab $on>模型</Tab><Tab>布局1</Tab><Tab>布局2</Tab>
            <HScroll>
              <Thumb $w={3} $h={10} />
              <ScrollButton aria-label="Scroll left"><Chevron dir="left" /></ScrollButton>
              <Spacer />
              <Thumb $w={12} $h={10} />
              <ScrollButton aria-label="Scroll right"><Chevron dir="right" /></ScrollButton>
            </HScroll>
          </TabRow>
        </Document>
        <Dock $w={24} $pad={4}>
          <Palette>
            <PaletteGrip /><Tools names={modify} />
            <PaletteGrip $h={8} /><Tools names={['Bring to Front', 'Send to Back', 'Bring Above', 'Send Under']} />
            <PaletteRule /><Tools names={['Text to Front', 'Hatch to Back']} />
          </Palette>
        </Dock>
      </Work>

      <Command>
        <CommandGrip />
        <CommandText>
          <History>
            <HistoryLine>{mixed(history)}</HistoryLine>
            <HistoryLine>{mixed(history)}</HistoryLine>
          </History>
          <Prompt>{mixed('命令:')}<PromptInput aria-label="Command" /></Prompt>
        </CommandText>
      </Command>

      <Status>
        <Coordinates>2538.7356,  999.2809 ,  0.0000</Coordinates>
        {modes.map(([n, on]) => <StatusButton key={n} $on={on} aria-label={n}><Icon name={n} size={15} /></StatusButton>)}
        <Spacer />
        <StatusButton $w={22}>模型</StatusButton>
        <StatusButton aria-label="Layouts"><Icon name="Quick View Layouts" size={14} /></StatusButton>
        <StatusButton aria-label="Drawings"><Icon name="Quick View Drawings" size={14} /></StatusButton>
        <StatusButton $w={54}><Icon name="Annotation" size={12} />1:1<Caret $c="#111" /></StatusButton>
        <StatusButton aria-label="Annotation visibility"><Icon name="Annotation Visibility" size={14} /></StatusButton>
        <StatusButton $w={20} aria-label="Annotation scale"><Icon name="Annotation" size={12} /></StatusButton>
        <StatusButton aria-label="Workspace switching"><Icon name="Gear" size={14} /></StatusButton>
        <StatusButton aria-label="Lock windows"><Icon name="Lock" size={14} /></StatusButton>
        <StatusButton aria-label="Hardware acceleration"><Icon name="Hardware" size={14} /></StatusButton>
        <StatusButton $w={20} aria-label="Isolate objects"><Icon name="Bulb" size={14} /></StatusButton>
        <StatusButton $w={11} aria-label="Status bar menu"><Caret $c="#111" /></StatusButton>
        <StatusButton aria-label="Clean screen"><Icon name="Clean Screen" size={13} /></StatusButton>
      </Status>

      <Taskbar>
        <StartButton aria-label="Start">
          <svg width="13" height="13" viewBox="0 0 13 13" fill="#fff" aria-hidden="true"><path d="M0 2l5.500-1v5H0zM6.500 1L13 0v6H6.500zM0 7h5.500v5L0 11zM6.500 7H13v6l-6.500-1z" /></svg>
        </StartButton>
        <TaskSearch>
          <svg width="17" height="17" fill="none" stroke="#111" strokeWidth="2" aria-hidden="true"><circle cx="8.5" cy="8.5" r="6.500" /></svg>
          <TaskInput aria-label="Search Windows" placeholder="在这里输入你要搜索的内容" />
          <svg width="14" height="14" fill="none" stroke="#444" aria-hidden="true"><path d="M5 3a2 2 0 0 1 4 0v4a2 2 0 0 1-4 0zM3.500 6v2c0 4 7 4 7 0V6M7 11v2.500" /></svg>
        </TaskSearch>
        <Tasks>
          <Task $on aria-label="AutoCAD">
            <svg width="18" height="18" viewBox="0 0 18 18" aria-hidden="true"><path d="M1 9h16v7H1z" fill="#c9c4c4" /><path d="M1 16h16v1H1z" fill="#777" /><path d="M2 12L6 1l4-1 7 11-5 2-1-3-4 1-1 3z" fill="#d3161b" /><path d="M8 8l1-3 2 3z" fill="#fff" /></svg>
          </Task>
          <Task aria-label="Edge">
            <svg width="16" height="16" viewBox="0 0 16 16" aria-hidden="true"><path d="M1 7C2 2 5 0 8.500 0 13 0 15.500 3 15.500 7v2H6c0 4 5 4.500 8.500 2.500V15C9 17.500 2.500 15.500 2.500 9.500c0-2.500 1-4 3-5C3.500 4.500 2 5.500 1 7zm5-1h5c0-3.500-4.500-3.500-5 0z" fill="#0a7fdc" /></svg>
          </Task>
          <Task aria-label="Paint">
            <svg width="18" height="18" viewBox="0 0 18 18" aria-hidden="true"><path d="M1 11C1 5 6 3 11 3c4 0 6 2 5 5-1 2-4 1-4 4 0 2-2 5-6 5s-5-2-5-6z" fill="#d3e6f2" /><circle cx="5" cy="8" r="1.5" fill="#e1523d" /><circle cx="9" cy="6" r="1.5" fill="#5ab548" /><circle cx="5" cy="12" r="1.5" fill="#3f81d0" /><circle cx="13" cy="6" r="1.5" fill="#f1c232" /><path d="M15 1l3 1-4 12-3 3v-4z" fill="#d98a3c" /></svg>
          </Task>
          <Task aria-label="File Explorer">
            <svg width="16" height="15" viewBox="0 0 16 15" aria-hidden="true"><path d="M0 1h6l1 2h9v11H0z" fill="#ffe08a" /><path d="M0 1h6l1 2H0z" fill="#e8b94a" /><path d="M3 14V8h10v6h-3v-3H6v3z" fill="#3aa7e0" /></svg>
          </Task>
          <Task aria-label="Movie Maker">
            <svg width="18" height="18" viewBox="0 0 18 18" fill="#fff" aria-hidden="true"><path d="M1 7h16v10H1zM1 3l2-.5L5 5l-3 1zM5 2l2-.5L9 4l-2 .500zM9 1.500l2-.5 2 2.500-2 .500zM13 1l2-.5 2 2-2 .500z" /></svg>
          </Task>
        </Tasks>
        <Tray>
          <TrayButton aria-label="Hidden icons"><svg width="9" height="6" fill="none" stroke="#fff"><path d="M0 5l4.500-4L9 5" /></svg></TrayButton>
          <TrayButton aria-label="Battery"><svg width="13" height="10" fill="none" stroke="#fff"><path d="M4.500 2.500h7v6h-7z" /><path d="M5 4h5v3H5zM0 1h4v4H1zM12 4h1v3h-1z" fill="#fff" stroke="none" /></svg></TrayButton>
          <TrayButton aria-label="Network"><svg width="11" height="11" fill="none" stroke="#bbb"><path d="M1 10C1 5 5 1 10 1M3 10c0-4 3-6 7-6M6 10c0-2 2-3 4-3" /><circle cx="9" cy="10" r="1" fill="#fff" /></svg></TrayButton>
          <TrayButton $w={16} aria-label="Volume"><svg width="13" height="11" fill="none" stroke="#ddd"><path d="M.5 3.500h2l3-3v9l-3-3h-2zM7.500 3.500v3M9.500 2v6" /><path d="M11.500 1v8" stroke="#888" /></svg></TrayButton>
          <TrayButton>中</TrayButton>
          <TrayButton $w={25} aria-label="Input method"><svg width="11" height="11"><path d="M0 0h11v11H0z" fill="#fff" /><path d="M2.500 9V2.500l3 4.500 3-4.500V9" fill="none" stroke="#04191e" strokeWidth="1.5" /></svg></TrayButton>
          <Clock><span>15:06</span><span>2018/12/31</span></Clock>
        </Tray>
      </Taskbar>

      <Watermark>
        <Brand>
          <span>Bai</span>
          <PawBox>
            <svg width="52" height="58" viewBox="0 0 52 58" fill="#fff" aria-hidden="true">
              <ellipse cx="7" cy="22" rx="6" ry="8" /><ellipse cx="20" cy="9" rx="6" ry="8.5" /><ellipse cx="36" cy="10" rx="6.5" ry="8" /><ellipse cx="46" cy="26" rx="6" ry="8" />
              <path d="M26 24c7 0 8 7 14 12 5 4 9 7 8 13-1 8-8 7-13 6-6-1-11-1-17 0C12 56 5 56 5 48c0-6 4-9 8-13 5-5 6-11 13-11z" />
            </svg>
            <PawText>du</PawText>
          </PawBox>
          <BrandCjk>经验</BrandCjk>
        </Brand>
        <Site>jingyan.baidu.com</Site>
      </Watermark>
    </Shell>
  );
}
